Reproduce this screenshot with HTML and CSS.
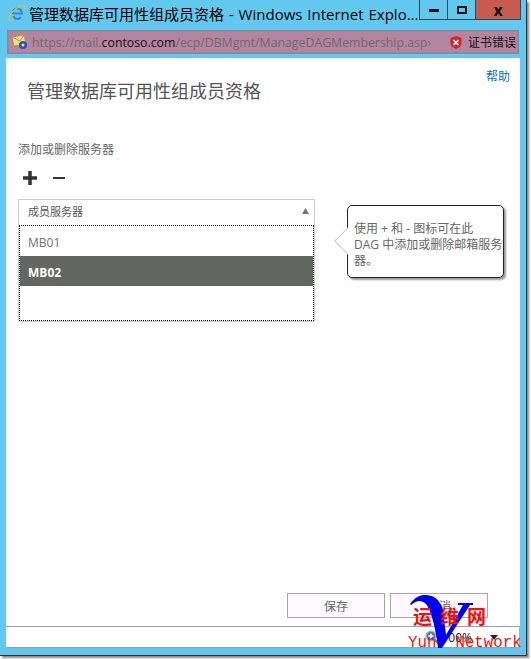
FILE: index.html
```html
<!DOCTYPE html>
<html lang="zh-CN">
<head>
    <meta charset="UTF-8">
    <title>管理数据库可用性组成员资格</title>
    <link rel="stylesheet" href="styles.css">
</head>
<body>
<div class="window">
    <div class="titlebar">
        <svg class="ie-icon" width="18" height="18" viewBox="0 0 18 18">
            <path d="M4.500 10c0-3.500 2-5.500 4.800-5.500s4.400 2 4.400 5H5.500M5.500 12c.6 2 2 3 3.800 3 1.500 0 2.800-.7 3.600-2" fill="none" stroke="#2f8bd8" stroke-width="2.200"/>
            <path d="M1 15.500C0 13 4 7.500 8.500 4.500 12 2 15.500.8 16.500 1.800c.7.700.2 2.200-1 3.700M1 15.500c.7 1.300 2.500 1 4-.2" fill="none" stroke="#e8b93a" stroke-width="1.200"/>
        </svg>
        <span class="title">管理数据库可用性组成员资格 - Windows Internet Explo...</span>
        <div class="controls">
            <span class="ctl ctl-min"><i></i></span>
            <span class="ctl ctl-max"><i></i></span>
            <span class="ctl ctl-close">x</span>
        </div>
    </div>
    <div class="addressbar">
        <svg class="mail-icon" width="20" height="18" viewBox="0 0 20 18">
            <path d="M1 4l12-2 2 9-12 2z" fill="#f3dc8c" stroke="#b59b45"/>
            <path d="M1 4l8 4 4-6" fill="none" stroke="#b59b45"/>
            <circle cx="12" cy="12" r="4" fill="#3450a8"/>
            <circle cx="12" cy="12" r="1.500" fill="#dfe6f5"/>
        </svg>
        <span class="url">https://mail.<b>contoso.com</b>/ecp/DBMgmt/ManageDAGMembership.asp›</span>
        <svg class="cert-icon" width="12" height="13" viewBox="0 0 12 13">
            <path d="M6 0l5.500 2v5c0 3-2.500 5-5.500 6-3-1-5.500-3-5.500-6V2z" fill="#d8232a"/>
            <path d="M3.500 4l5 5M8.500 4l-5 5" stroke="#fff" stroke-width="1.600"/>
        </svg>
        <span class="cert-text">证书错误</span>
    </div>
    <div class="page">
        <div class="help-row"><a class="help">帮助</a></div>
        <h1 class="heading">管理数据库可用性组成员资格</h1>
        <div class="section-label">添加或删除服务器</div>
        <div class="toolbar">
            <svg width="16" height="16" viewBox="0 0 16 16"><path d="M8 1v14M1 8h14" stroke="#333" stroke-width="3.500"/></svg>
            <svg width="14" height="16" viewBox="0 0 14 16"><path d="M1 8h12" stroke="#333" stroke-width="2"/></svg>
        </div>
        <div class="member-area">
            <div class="member-box">
                <div class="list-head">
                    <span>成员服务器</span>
                    <svg width="7" height="6" viewBox="0 0 7 6"><path d="M3.500 0L7 6H0z" fill="#7b6a80"/></svg>
                </div>
                <div class="list-body">
                    <div class="list-row">MB01</div>
                    <div class="list-row selected">MB02</div>
                </div>
            </div>
            <div class="callout">使用 + 和 - 图标可在此<br>DAG 中添加或删除邮箱服务<br>器。</div>
        </div>
        <div class="actions">
            <button class="btn">保存</button>
            <button class="btn">取消</button>
        </div>
    </div>
    <div class="statusbar">
        <svg class="zoom-icon" width="14" height="14" viewBox="0 0 14 14">
            <path d="M9 9l4 4" stroke="#8a6a40" stroke-width="2"/>
            <circle cx="6" cy="6" r="5" fill="#2f7fd0" stroke="#b5b5b5" stroke-width="1.500"/>
            <path d="M6 3.500v5M3.500 6h5" stroke="#fff" stroke-width="1.500"/>
        </svg>
        <span class="zoom">100%</span>
        <span class="zoom-arrow"></span>
    </div>
    <div class="watermark">
        <svg width="72" height="60" viewBox="0 0 72 60">
            <path d="M4 14C9 7 14 5 19 5c9 0 15 5 18 15l3 25L57 15h-5v-2h15v2h-3L36 58h-4c-2-18-6-33-10-41C18 10 12 9 5 15z" fill="#0000f0"/>
        </svg>
        <span class="wm-cn">运维网</span>
        <span class="wm-en">Yun  Network</span>
    </div>
</div>
</body>
</html>
```

FILE: styles.css
```css
html, body { margin: 0; padding: 0; background: #fff; }
body { width: 531px; height: 659px; overflow: hidden; font-family: "Open Sans", "Noto Sans CJK SC", sans-serif; }

.window { position: relative; width: 526px; height: 655px; background: #62c8ef; border-right: 1px solid #333; border-bottom: 1px solid #333; box-shadow: 2px 2px 2px #888; display: flex; flex-direction: column; }

.titlebar { height: 30px; display: flex; align-items: center; padding-left: 8px; flex-shrink: 0; }
.ie-icon { margin-right: 3px; margin-top: -4px; }
.title { font-size: 15px; line-height: 20px; margin-top: -3px; color: #000; white-space: nowrap; flex: 1; word-spacing: 1px; }
.controls { display: flex; align-self: flex-start; margin-right: 5px; height: 19px; border: 1px solid #2c4a58; border-top: none; }
.ctl { width: 27px; display: flex; align-items: center; justify-content: center; border-right: 1px solid #2c4a58; }
.ctl-min i { width: 10px; height: 3px; background: #111; margin-top: 2px; }
.ctl-max i { width: 6px; height: 4px; border: 2px solid #111; }
.ctl-close { width: 44px; background: #c75b52; border-right: none; font-weight: 700; font-size: 16px; line-height: 16px; color: #111; }

.addressbar { height: 24px; margin: 0 7px; display: flex; align-items: center; background: #b4859f; border: 1px solid #4f9fb8; outline: 1px solid #d56a80; outline-offset: -2px; box-sizing: border-box; padding-left: 3px; flex-shrink: 0; }
.mail-icon { flex-shrink: 0; margin-right: 1px; }
.url { font-size: 12.300px; color: #6f6a70; white-space: nowrap; overflow: hidden; width: 408px; }
.url b { font-weight: 400; color: #111; }
.cert-icon { margin: 0 6px 0 10px; flex-shrink: 0; }
.cert-text { font-size: 12px; color: #111; white-space: nowrap; }

.page { flex: 1; margin: 4px 6px 0 6px; background: #fff; display: flex; flex-direction: column; color: #666; }
.help-row { display: flex; align-items: flex-start; justify-content: flex-end; box-sizing: border-box; height: 21px; padding: 12px 10px 0 0; }
.help { color: #0072c6; font-size: 12px; line-height: 14px; }
.heading { font-size: 18px; font-weight: 400; color: #555; margin: 0 0 0 21px; line-height: 24px; }
.section-label { font-size: 12px; margin: 38px 0 0 12px; line-height: 18px; }
.toolbar { display: flex; align-items: center; gap: 14px; margin: 10px 0 0 16px; height: 18px; }

.member-area { display: flex; align-items: flex-start; margin: 12px 0 0 12px; }
.member-box { width: 297px; flex-shrink: 0; }
.list-head { height: 26px; box-sizing: border-box; border: 1px solid #ccc; border-bottom: none; padding: 0 5px 3px 9px; display: flex; align-items: center; justify-content: space-between; font-size: 11px; color: #555; }
.list-body { height: 96px; box-sizing: border-box; margin: 0 1px; border: 1px dotted #111; box-shadow: 1px 0 0 #ccc, -1px 0 0 #ccc, 0 1px 0 #ccc; }
.list-row { height: 30px; line-height: 34px; padding-left: 8px; font-size: 12px; color: #707070; }
.list-row.selected { background: #646664; color: #fff; font-weight: 700; }

.callout { position: relative; width: 157px; margin: 6px 0 0 32px; box-sizing: border-box; padding: 15px 0 8px 6px; background: #fff; border: 1px solid #222; border-radius: 5px; box-shadow: 2px 2px 2px #999; font-size: 12px; line-height: 16px; color: #666; white-space: nowrap; }
.callout::before { content: ""; position: absolute; left: -10px; top: 25px; width: 20px; height: 20px; box-sizing: border-box; background: #fff; border-left: 1px solid #bbb; border-bottom: 1px solid #bbb; transform: rotate(45deg); clip-path: polygon(0 0, 0 100%, 100% 100%); }

.actions { margin-top: auto; display: flex; justify-content: flex-end; gap: 5px; padding: 0 32px 8px 0; }
.btn { width: 98px; height: 25px; background: #fdf9ff; border: 1px solid #a6a6a6; font: 12px "Open Sans", "Noto Sans CJK SC", sans-serif; color: #666; padding: 0; }

.statusbar { height: 22px; box-sizing: border-box; margin: 0 7px 7px 6px; background: #fff; border-top: 1px solid #a0a0a0; border-bottom: 1px solid #a0a0a0; display: flex; align-items: center; justify-content: flex-end; padding-right: 21px; flex-shrink: 0; font-size: 12px; color: #111; }
.zoom-icon { margin-right: 2px; }
.zoom { margin-right: 18px; }
.zoom-arrow { width: 0; height: 0; border: 4px solid transparent; border-top: 5px solid #222; border-bottom: none; }

.watermark { position: absolute; left: 406px; top: 590px; width: 120px; height: 66px; }
.watermark svg { position: absolute; left: 0; top: 0; }
.wm-cn { position: absolute; left: 7px; top: 16px; font: 700 19px/20px "Noto Sans CJK SC", sans-serif; color: #f01010; letter-spacing: 8px; white-space: nowrap; }
.wm-en { position: absolute; left: 2px; top: 44px; font: 15.800px/18px "Liberation Mono", monospace; color: #f01010; white-space: pre; }
```
